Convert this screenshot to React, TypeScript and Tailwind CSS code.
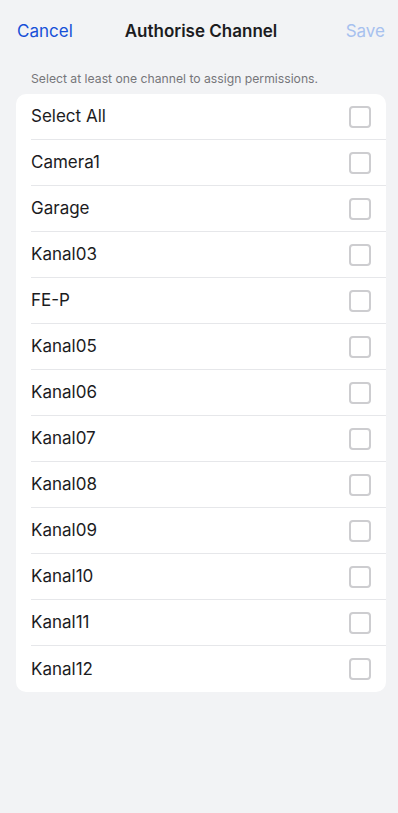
import React, { useState } from 'react';

const CHANNELS = [
  'Camera1',
  'Garage',
  'Kanal03',
  'FE-P',
  'Kanal05',
  'Kanal06',
  'Kanal07',
  'Kanal08',
  'Kanal09',
  'Kanal10',
  'Kanal11',
  'Kanal12',
];

const Row: React.FC<{ label: string; checked: boolean; last: boolean; onToggle: () => void }> = ({
  label,
  checked,
  last,
  onToggle,
}) => (
  <div className="pl-[15px]" onClick={onToggle}>
    <div className={`h-[46px] pr-[15px] flex items-center justify-between ${last ? '' : 'border-b border-[#e6e7ea]'}`}>
      <span className="text-[17px] text-[#1c1c1e] pt-px">{label}</span>
      <div
        className={`w-[22px] h-[22px] rounded-[4px] border-2 ${checked ? 'bg-[#1750d8] border-[#1750d8]' : 'border-[#cdcdd0] bg-white'}`}
      ></div>
    </div>
  </div>
);

export default function App() {
  const [selected, setSelected] = useState<string[]>([]);
  const all = ['Select All', ...CHANNELS];

  const toggle = (name: string) => {
    if (name === 'Select All') {
      setSelected(selected.length === CHANNELS.length ? [] : [...CHANNELS]);
      return;
    }
    setSelected(selected.includes(name) ? selected.filter((s) => s !== name) : [...selected, name]);
  };

  return (
    <div className="min-h-screen bg-[#f2f3f5] font-['Inter',sans-serif]">
      <div className="h-16 pl-[17px] pr-[13px] grid grid-cols-[1fr_auto_1fr] items-center">
        <button className="justify-self-start text-[17px] text-[#1750d8]">Cancel</button>
        <h1 className="text-[17px] font-semibold text-[#1c1c1e]">Authorise Channel</h1>
        <button className="justify-self-end text-[17px] text-[#a7c1ef]">Save</button>
      </div>
      <p className="mt-[7px] px-[31px] text-[12.2px] leading-4 text-[#76767a]">
        Select at least one channel to assign permissions.
      </p>
      <div className="ml-4 mr-3 mt-[7px] bg-white rounded-[10px] overflow-hidden">
        {all.map((name, i) => (
          <Row
            key={name}
            label={name}
            last={i === all.length - 1}
            checked={name === 'Select All' ? selected.length === CHANNELS.length : selected.includes(name)}
            onToggle={() => toggle(name)}
          />
        ))}
      </div>
    </div>
  );
}
